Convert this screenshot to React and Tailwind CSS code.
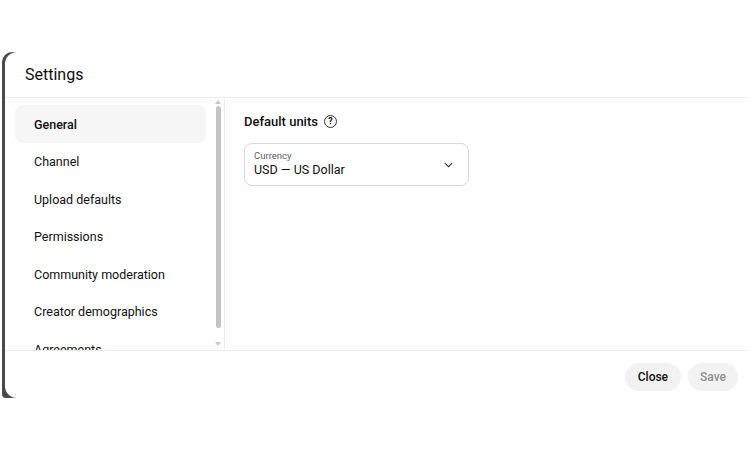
import React from "react";

const ITEMS = [
  "General",
  "Channel",
  "Upload defaults",
  "Permissions",
  "Community moderation",
  "Creator demographics",
  "Agreements",
];

export default function App() {
  return (
    <div className="w-[750px] h-[450px] bg-white overflow-hidden pt-[52px] pl-[2px]" style={{ fontFamily: "Roboto, 'Noto Sans', sans-serif" }}>
      <div className="w-[746px] h-[346px] bg-[#4a4a4a] pl-[3px] rounded-tl-[10px] rounded-bl-[4px]">
        <div className="w-full h-full bg-white rounded-l-[12px] flex flex-col text-[#0f0f0f]">
          <div className="h-[46px] border-b border-[#ececec] flex items-center pl-[20px] pt-[1px]">
            <h1 className="text-[16px] leading-none">Settings</h1>
          </div>
          <div className="flex h-[253px] border-b border-[#ececec]">
            <div className="w-[220px] border-r border-[#ececec] flex overflow-hidden">
              <div className="flex-1 pl-[10px] pt-[7px] overflow-hidden">
                {ITEMS.map((t, i) => (
                  <div
                    key={t}
                    className={`h-[37.5px] w-[191px] shrink-0 rounded-lg flex items-center pl-[19px] pt-[3px] text-[12.5px] ${i === 0 ? "bg-[#f6f6f6] font-medium" : ""}`}
                  >
                    {t}
                  </div>
                ))}
              </div>
              <div className="w-[8px] mr-[2px] flex flex-col items-center pt-[2px]">
                <div className="w-0 h-0 border-x-[3px] border-x-transparent border-b-[4px] border-b-[#c8c8c8]" />
                <div className="w-[5px] h-[222px] mt-[2px] rounded-full bg-[#c4c4c4]" />
                <div className="flex-1" />
                <div className="w-0 h-0 border-x-[3px] border-x-transparent border-t-[4px] border-t-[#c8c8c8] mb-[4px]" />
              </div>
            </div>
            <div className="flex-1 pl-[19px] pt-[14px]">
              <div className="flex items-center gap-[6px] text-[13px] font-medium">
                Default units
                <span className="w-[13px] h-[13px] rounded-full border border-[#333] flex items-center justify-center text-[9px] font-bold leading-none">?</span>
              </div>
              <div className="mt-[11px] w-[225px] h-[43px] border border-[#d9d9d9] rounded-lg flex items-center justify-between pl-[9px] pr-[13px]">
                <div className="flex flex-col">
                  <span className="text-[9.5px] text-[#606060] leading-[12px]">Currency</span>
                  <span className="text-[12.5px] leading-[16px]">USD — US Dollar</span>
                </div>
                <svg width="13" height="13" viewBox="0 0 24 24" fill="none" stroke="#333" strokeWidth="2"><path d="M5 9l7 7 7-7" /></svg>
              </div>
            </div>
          </div>
          <div className="flex-1 flex items-center justify-end gap-[7px] pr-[10px] pt-[4px]">
            <button className="h-[28px] px-[13px] rounded-full bg-[#f2f2f2] text-[12px] font-medium">Close</button>
            <button className="h-[28px] px-[12px] rounded-full bg-[#f2f2f2] text-[12px] font-medium text-[#909090]">Save</button>
          </div>
        </div>
      </div>
    </div>
  );
}
